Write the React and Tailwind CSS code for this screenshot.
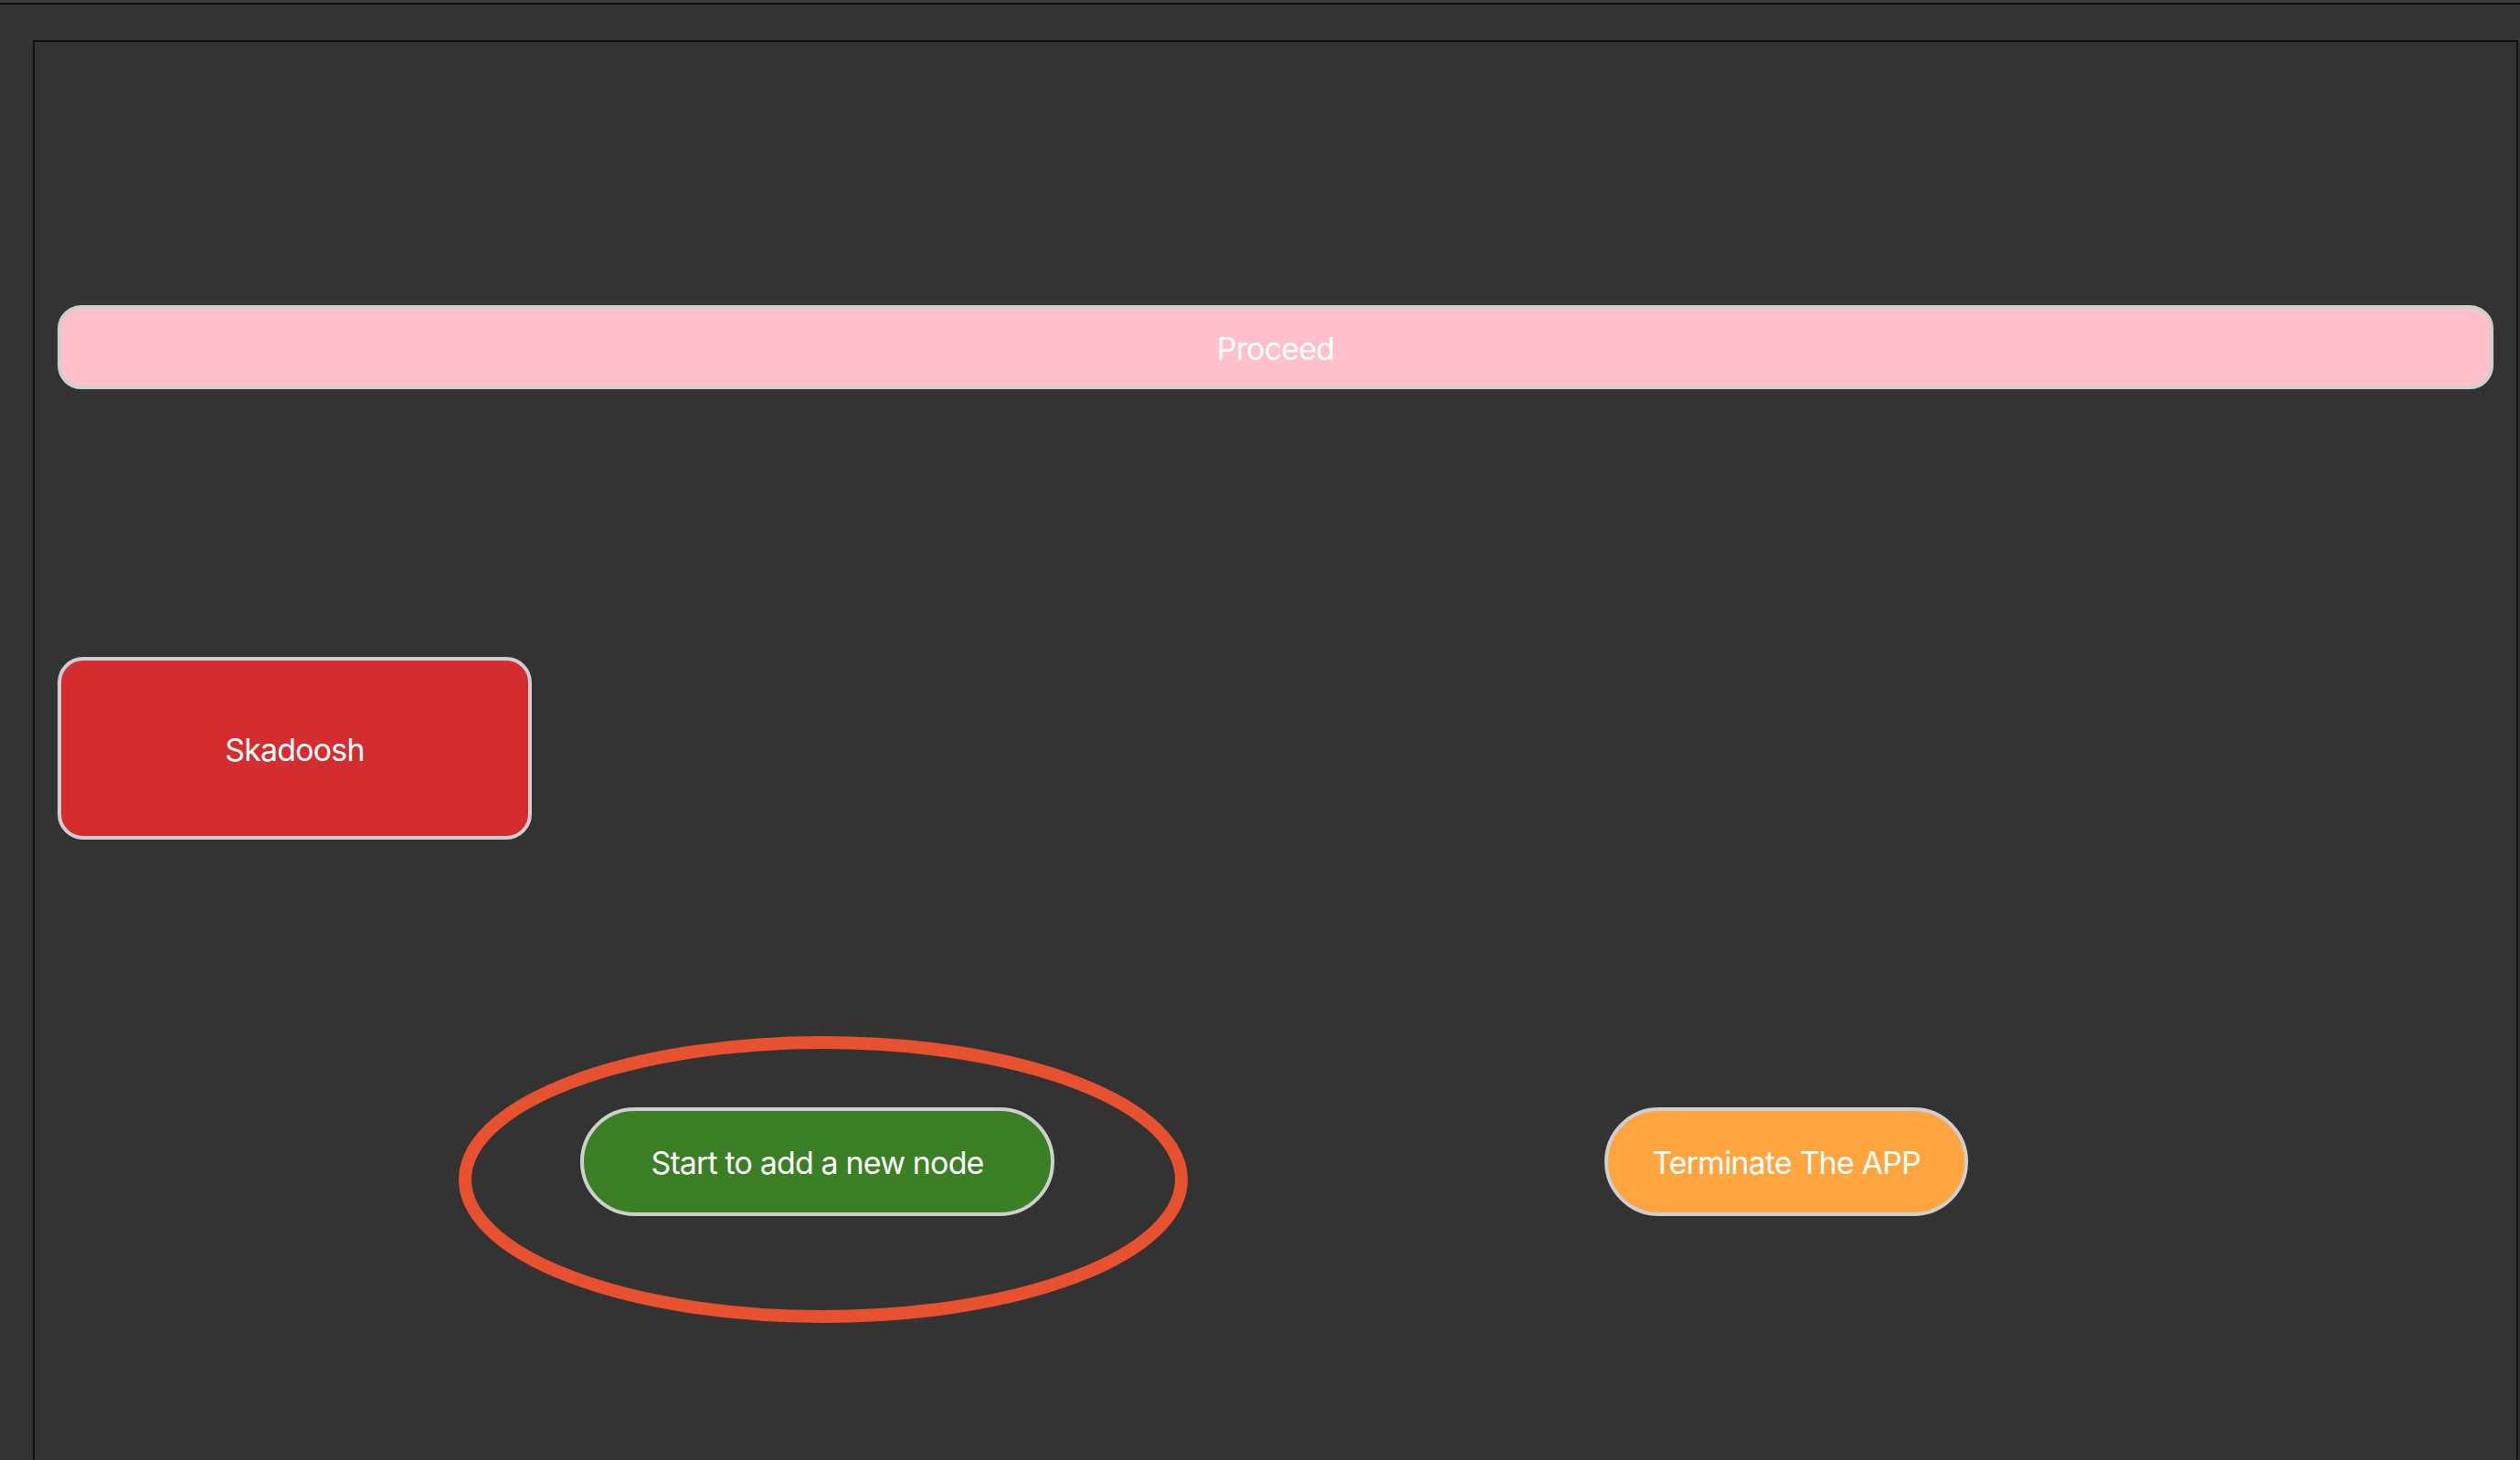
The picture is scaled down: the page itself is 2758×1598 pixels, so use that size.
const font = { fontFamily: "Inter, 'Liberation Sans', sans-serif" };

const Highlight = () => (
  <svg
    className="absolute left-[438px] top-[-78px] pointer-events-none"
    width="800"
    height="314"
    viewBox="0 0 800 314"
  >
    <ellipse
      cx="400"
      cy="157"
      rx="392"
      ry="150"
      fill="none"
      stroke="#e8512f"
      strokeWidth="14"
    />
  </svg>
);

export default function App() {
  return (
    <div className="h-[1598px] overflow-hidden bg-[#333333]" style={font}>
      <div className="h-[5px] bg-[#3c3c3c] border-b-2 border-[#111111]" />

      <div className="ml-[36px] mr-[2px] mt-[39px] h-[1600px] border-l-2 border-t-2 border-r-2 border-[#111111] px-[25px]">
        <button className="mt-[288px] flex h-[92px] w-full items-center justify-center rounded-[26px] border-4 border-[#cfcfcf] bg-[#ffc0cb] pt-[2px] text-[34px] tracking-[-0.025em] text-white">
          Proceed
        </button>

        <div className="mt-[293px] flex h-[200px] w-[519px] items-center justify-center rounded-[28px] border-4 border-[#cfcfcf] bg-[#d32d30] pt-[2px] text-[34px] tracking-[-0.025em] text-white">
          Skadoosh
        </div>

        <div className="relative mt-[293px] flex items-center">
          <Highlight />
          <button className="ml-[572px] flex h-[119px] w-[519px] items-center justify-center rounded-full border-4 border-[#cfcfcf] bg-[#3a7f23] pt-[2px] text-[34px] tracking-[-0.025em] text-white">
            Start to add a new node
          </button>
          <button className="ml-[602px] flex h-[119px] w-[398px] items-center justify-center rounded-full border-4 border-[#cfcfcf] bg-[#ffa53f] pt-[2px] text-[34px] tracking-[-0.025em] text-white">
            Terminate The APP
          </button>
        </div>
      </div>
    </div>
  );
}
